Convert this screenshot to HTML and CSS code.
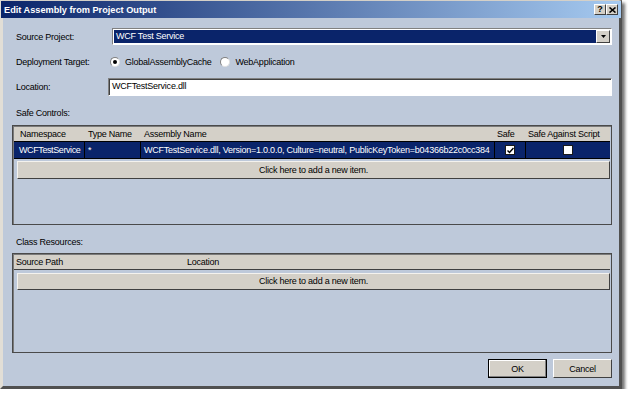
FILE: index.html
```html
<!DOCTYPE html>
<html lang="en">
<head>
  <meta charset="UTF-8" />
  <title>Edit Assembly from Project Output</title>
  <link rel="stylesheet" href="styles.css">
</head>
<body>
  <div class="window">
    <div class="titlebar">
      <span class="title">Edit Assembly from Project Output</span>
      <div class="caption-btns">
        <span class="cap-btn cap-help">?</span>
        <span class="cap-btn">
          <svg width="7" height="6" viewBox="0 0 7 6"><path d="M0.5 0.5 L6.5 5.5 M6.5 0.5 L0.5 5.5" stroke="#000" stroke-width="1.6"/></svg>
        </span>
      </div>
    </div>

    <div class="content">
      <div class="row row-project">
        <span class="label">Source Project:</span>
        <div class="combo">
          <span class="combo-value">WCF Test Service</span>
          <span class="combo-arrow">
            <svg width="5" height="3" viewBox="0 0 5 3"><path d="M0 0 H5 L2.5 3 Z" fill="#000"/></svg>
          </span>
        </div>
      </div>

      <div class="row row-target">
        <span class="label">Deployment Target:</span>
        <span class="radio checked"></span>
        <span class="radio-text">GlobalAssemblyCache</span>
        <span class="radio"></span>
        <span class="radio-text">WebApplication</span>
      </div>

      <div class="row row-location">
        <span class="label">Location:</span>
        <div class="textbox">WCFTestService.dll</div>
      </div>

      <div class="section-label">Safe Controls:</div>
      <div class="grid">
        <div class="grid-head safe-cols">
          <span>Namespace</span>
          <span>Type Name</span>
          <span>Assembly Name</span>
          <span>Safe</span>
          <span>Safe Against Script</span>
        </div>
        <div class="grid-row safe-cols">
          <span class="cell-ns">WCFTestService</span>
          <span>*</span>
          <span>WCFTestService.dll, Version=1.0.0.0, Culture=neutral, PublicKeyToken=b04366b22c0cc384</span>
          <span class="cell-check">
            <span class="checkbox">
              <svg width="7" height="7" viewBox="0 0 7 7"><path d="M0.5 3.5 L2.5 5.5 L6.5 1" fill="none" stroke="#000" stroke-width="1.5"/></svg>
            </span>
          </span>
          <span class="cell-check"><span class="checkbox"></span></span>
        </div>
        <div class="add-row">Click here to add a new item.</div>
      </div>

      <div class="section-label second">Class Resources:</div>
      <div class="grid">
        <div class="grid-head res-cols">
          <span>Source Path</span>
          <span>Location</span>
        </div>
        <div class="add-row add-row-res">Click here to add a new item.</div>
      </div>

      <div class="buttons">
        <button class="btn btn-default">OK</button>
        <button class="btn">Cancel</button>
      </div>
    </div>
  </div>
</body>
</html>
```

FILE: styles.css
```css
* { box-sizing: border-box; }
body {
  margin: 0;
  background: #fff;
  font-family: "Liberation Sans", Arial, sans-serif;
  font-size: 9px;
  letter-spacing: -0.24px;
  color: #000;
}
.window {
  width: 622px;
  height: 389px;
  border-style: solid;
  border-width: 1px 3px 3px 3px;
  border-color: #d4d0c8 #505050 #505050 #e2ded6;
  background: #bec9da;
  box-shadow: 3px 3px 3px rgba(0, 0, 0, 0.55);
  display: flex;
  flex-direction: column;
}
.titlebar {
  margin: 0 -2px;
  height: 17px;
  display: flex;
  align-items: center;
  justify-content: space-between;
  padding: 0 3px 0 3px;
  background: linear-gradient(to right, #0a246a, #a6caf0);
}
.title {
  color: #fff;
  font-weight: bold;
  font-size: 9.2px;
  letter-spacing: 0;
}
.caption-btns {
  display: flex;
}
.cap-btn {
  width: 12px;
  height: 11px;
  background: #d4d0c8;
  border: 1px solid;
  border-color: #fff #404040 #404040 #fff;
  display: flex;
  align-items: center;
  justify-content: center;
  font-weight: bold;
  font-size: 9px;
  line-height: 1;
}

.content {
  flex: 1;
  padding: 10px 7px 0 13px;
  display: flex;
  flex-direction: column;
}
.row {
  display: flex;
  align-items: center;
}
.row-project { height: 17px; }
.row-project .label { width: 96px; }
.row-target { height: 16px; margin-top: 9px; }
.row-target .label { width: 94px; }
.row-location { height: 18px; margin-top: 8px; }
.row-location .label { width: 92px; }

.combo {
  flex: 1;
  height: 17px;
  display: flex;
  border: 1px solid;
  border-color: #808080 #fff #fff #808080;
  background: #fff;
  padding: 1px;
}
.combo-value {
  flex: 1;
  background: #0a246a;
  color: #fff;
  padding-left: 2px;
  line-height: 13px;
}
.combo-arrow {
  width: 14px;
  background: #d4d0c8;
  border: 1px solid;
  border-color: #fff #404040 #404040 #fff;
  display: flex;
  align-items: center;
  justify-content: center;
}
.radio {
  width: 10px;
  height: 10px;
  border-radius: 50%;
  background: #fff;
  border: 1px solid;
  border-color: #808080 #e0e0e0 #e0e0e0 #808080;
  display: flex;
  align-items: center;
  justify-content: center;
}
.radio.checked::after {
  content: "";
  width: 4px;
  height: 4px;
  border-radius: 50%;
  background: #000;
}
.radio-text { margin: 0 9px 0 5px; }
.textbox {
  flex: 1;
  height: 18px;
  background: #fff;
  border: 1px solid;
  border-color: #808080 #fff #fff #808080;
  box-shadow: inset 1px 1px 0 #404040;
  padding-left: 3px;
  line-height: 15px;
}

.section-label {
  margin-top: 10px;
  height: 14px;
  line-height: 14px;
}
.grid {
  margin: 5px 0 0 -4px;
  height: 100px;
  border: 1px solid #4a4a4a;
  box-shadow: inset 1px 1px 0 #7a7a7a;
  display: flex;
  flex-direction: column;
}
.section-label.second + .grid { margin-top: 4px; }
.safe-cols {
  display: grid;
  grid-template-columns: 71px 56px 354px 31px 1fr;
}
.res-cols {
  display: grid;
  grid-template-columns: 171px 1fr;
}
.grid-head {
  height: 14px;
  margin: 1px 1px 0 1px;
  background: #d4d0c8;
  line-height: 14px;
}
.grid-head span { padding-left: 3px; white-space: nowrap; }
.grid-head span:first-child { padding-left: 6px; }
.grid-head span:nth-child(4),
.grid-head span:nth-child(5) { padding-left: 2px; }
.res-cols { height: 15px; border-bottom: 1px solid #404040; }
.res-cols span,
.res-cols span:first-child { padding-left: 2px; }
.grid-row {
  height: 18px;
  margin: 0 1px;
  background: #0a246a;
  border-top: 1px solid #000;
  border-bottom: 1px solid #000;
  color: #fff;
  line-height: 16px;
}
.grid-row > span {
  border-right: 1px solid #000;
  padding-left: 3px;
  white-space: nowrap;
  overflow: hidden;
}
.grid-row > .cell-ns { padding-left: 5px; letter-spacing: -0.4px; }
.grid-row > span:last-child { border-right: none; }
.cell-check {
  display: flex;
  align-items: center;
  justify-content: center;
  padding-left: 0 !important;
}
.checkbox {
  width: 10px;
  height: 10px;
  background: #fff;
  border: 1px solid #1a1a1a;
  display: flex;
  align-items: center;
  justify-content: center;
}
.add-row {
  height: 18px;
  margin: 2px 1px 0 4px;
  background: #d4d0c8;
  border: 1px solid;
  border-color: #f4f2ee #404040 #404040 #f4f2ee;
  text-align: center;
  line-height: 16px;
}
.add-row-res { margin-top: 3px; height: 17px; line-height: 15px; }

.buttons {
  margin-top: 6px;
  display: flex;
  justify-content: flex-end;
  gap: 6px;
}
.btn {
  width: 59px;
  height: 19px;
  font-family: inherit;
  font-size: 9px;
  letter-spacing: -0.24px;
  background: #d4d0c8;
  border: 1px solid;
  border-color: #fff #404040 #404040 #fff;
  padding: 0;
  color: #000;
}
.btn-default {
  border: 1px solid #000;
  box-shadow: inset -1px -1px 0 #808080, inset 1px 1px 0 #fff;
}
```
